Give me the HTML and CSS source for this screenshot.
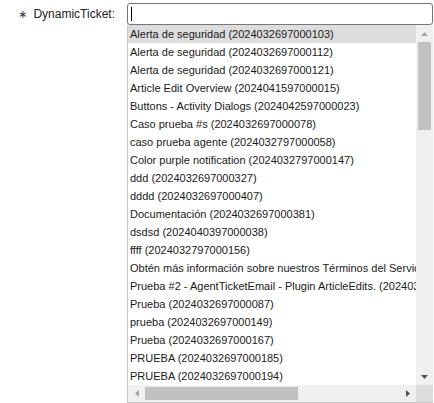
FILE: index.html
```html
<!DOCTYPE html>
<html lang="es">
<head>
<meta charset="utf-8">
<title>DynamicTicket</title>
<link rel="stylesheet" href="styles.css">
</head>
<body>
<div class="field">
  <label class="label"><span class="req">∗</span>DynamicTicket:</label>
  <div class="control">
    <div class="input"><span class="caret"></span></div>
    <div class="list">
      <ul class="items">
        <li class="item active">Alerta de seguridad (2024032697000103)</li>
        <li class="item">Alerta de seguridad (2024032697000112)</li>
        <li class="item">Alerta de seguridad (2024032697000121)</li>
        <li class="item">Article Edit Overview (2024041597000015)</li>
        <li class="item">Buttons - Activity Dialogs (2024042597000023)</li>
        <li class="item">Caso prueba #s (2024032697000078)</li>
        <li class="item">caso prueba agente (2024032797000058)</li>
        <li class="item">Color purple notification (2024032797000147)</li>
        <li class="item">ddd (2024032697000327)</li>
        <li class="item">dddd (2024032697000407)</li>
        <li class="item">Documentación (2024032697000381)</li>
        <li class="item">dsdsd (2024040397000038)</li>
        <li class="item">ffff (2024032797000156)</li>
        <li class="item">Obtén más información sobre nuestros Términos del Servicio (2024032697000396)</li>
        <li class="item">Prueba #2 - AgentTicketEmail - Plugin ArticleEdits. (2024032697000290)</li>
        <li class="item">Prueba (2024032697000087)</li>
        <li class="item">prueba (2024032697000149)</li>
        <li class="item">Prueba (2024032697000167)</li>
        <li class="item">PRUEBA (2024032697000185)</li>
        <li class="item">PRUEBA (2024032697000194)</li>
      </ul>
      <div class="vscroll">
        <div class="sbtn"><svg width="7" height="4" viewBox="0 0 7 4"><polygon points="0,4 7,4 3.5,0" class="arrow-off"/></svg></div>
        <div class="vtrack"><div class="vthumb"></div></div>
        <div class="sbtn"><svg width="7" height="4" viewBox="0 0 7 4"><polygon points="0,0 7,0 3.5,4" class="arrow-on"/></svg></div>
      </div>
      <div class="hscroll">
        <div class="sbtn"><svg width="4" height="7" viewBox="0 0 4 7"><polygon points="4,0 4,7 0,3.5" class="arrow-off"/></svg></div>
        <div class="htrack"><div class="hthumb"></div></div>
        <div class="sbtn"><svg width="4" height="7" viewBox="0 0 4 7"><polygon points="0,0 0,7 4,3.5" class="arrow-on"/></svg></div>
      </div>
      <div class="corner"></div>
    </div>
  </div>
</div>
</body>
</html>
```

FILE: styles.css
```css
html, body {
  margin: 0;
  padding: 0;
  background: #ffffff;
}

body {
  font-family: "Liberation Sans", Arial, sans-serif;
  font-size: 12px;
  color: #222222;
  width: 434px;
  height: 403px;
  overflow: hidden;
}

.field {
  display: flex;
  align-items: flex-start;
  padding-top: 3px;
}

.label {
  width: 115px;
  margin-right: 12px;
  text-align: right;
  line-height: 22px;
  height: 22px;
  color: #222222;
  white-space: nowrap;
}

.req {
  font-family: "DejaVu Sans", sans-serif;
  font-size: 11px;
  margin-right: 6px;
  color: #333333;
}

.control {
  width: 306px;
  display: flex;
  flex-direction: column;
}

.input {
  box-sizing: border-box;
  height: 22px;
  border: 1px solid #767676;
  border-radius: 3px;
  background: #ffffff;
  display: flex;
  align-items: center;
  padding-left: 3px;
}

.caret {
  width: 1px;
  height: 14px;
  background: #000000;
}

.list {
  display: grid;
  grid-template-columns: 288px 17px;
  grid-template-rows: 360px 17px;
  border-left: 1px solid #c9c9c9;
  border-bottom: 1px solid #c9c9c9;
  background: #ffffff;
}

.items {
  list-style: none;
  margin: 0;
  padding: 0;
  overflow: hidden;
}

.item {
  height: 18px;
  line-height: 18px;
  padding-left: 2px;
  font-size: 11px;
  white-space: nowrap;
  color: #1a1a1a;
}

.item.active {
  background: #dddddd;
}

.vscroll {
  background: #f0f0f0;
  display: flex;
  flex-direction: column;
}

.sbtn {
  width: 17px;
  height: 17px;
  display: flex;
  align-items: center;
  justify-content: center;
  flex: none;
}

.vtrack {
  flex: 1;
  padding: 0 2px;
}

.vthumb {
  height: 88px;
  background: #c1c1c1;
}

.hscroll {
  background: #f0f0f0;
  display: flex;
}

.htrack {
  flex: 1;
  padding: 2px 0;
}

.hthumb {
  width: 153px;
  height: 13px;
  background: #c1c1c1;
}

.corner {
  background: #dcdcdc;
}

.arrow-off {
  fill: #a3a3a3;
}

.arrow-on {
  fill: #505050;
}
```
